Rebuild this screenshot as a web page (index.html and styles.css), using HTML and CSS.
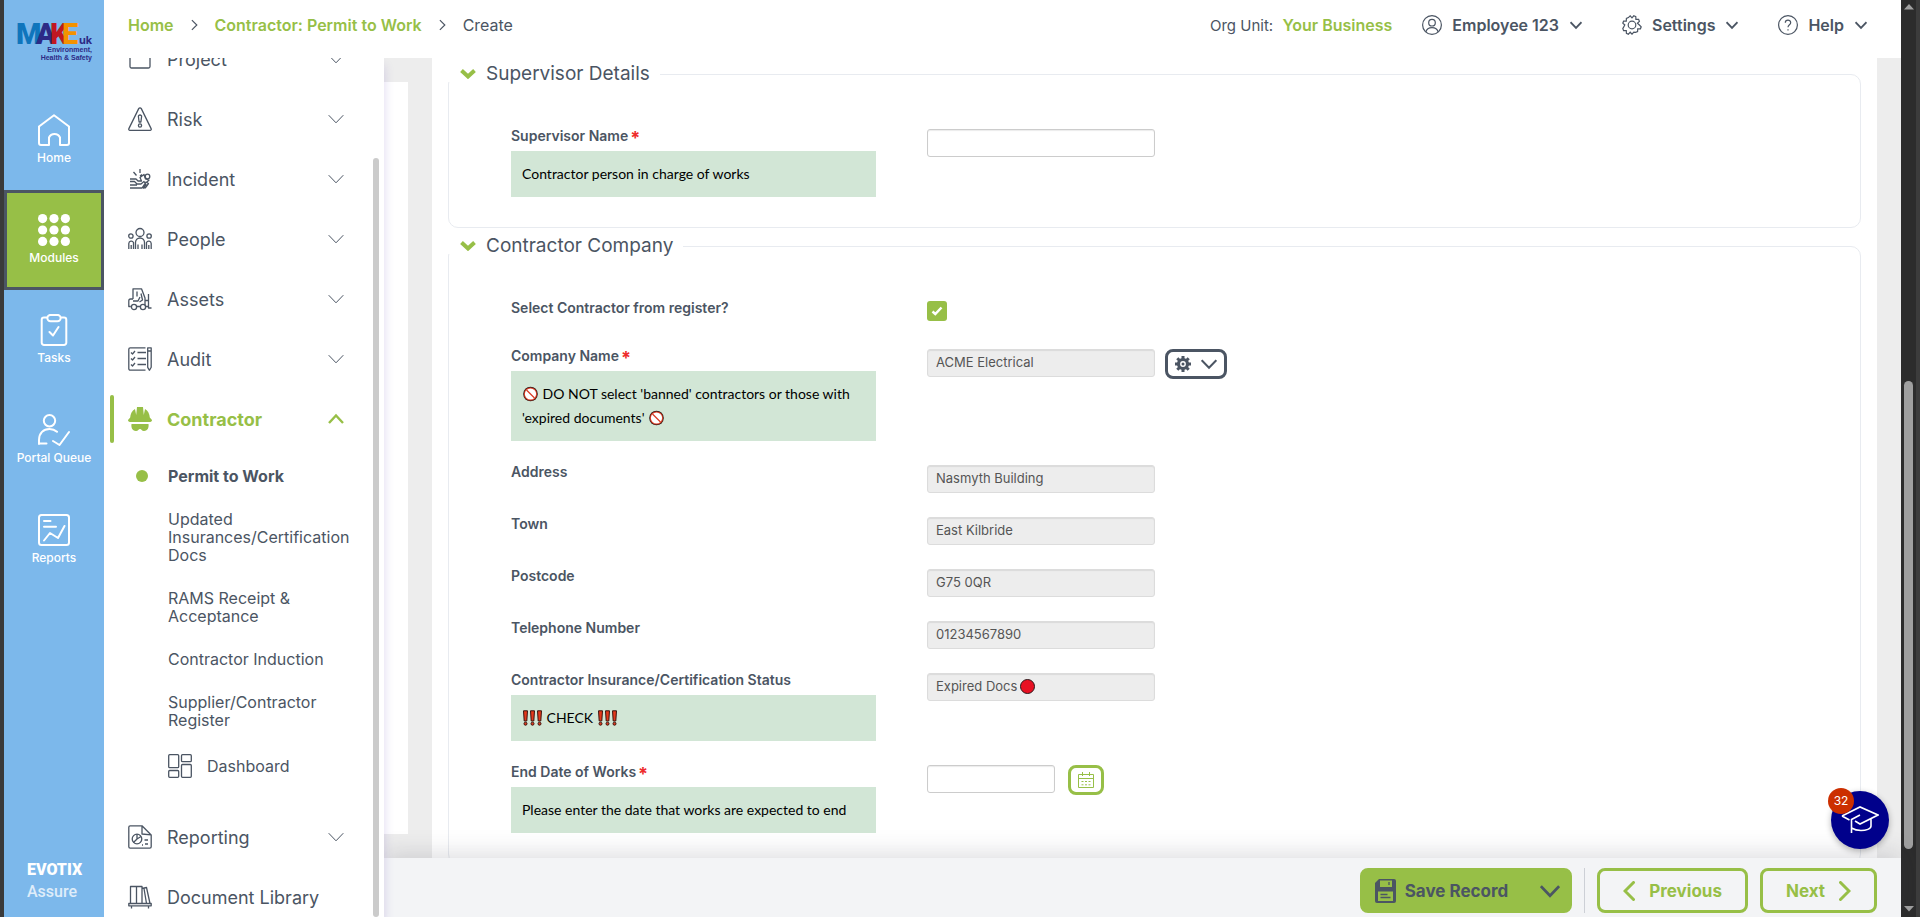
FILE: index.html
```html
<!DOCTYPE html>
<html lang="en">
<head>
    <meta charset="UTF-8">
    <meta name="viewport" content="width=device-width, initial-scale=1.0">
    <title>Contractor: Permit to Work - Create</title>
    <link rel="stylesheet" href="styles.css">
</head>
<body>
    <svg class="sprite" aria-hidden="true">
        <symbol id="chevron-down" viewBox="0 0 16 16"><path d="M.7 4.2 8 11.8l7.3-7.6"/></symbol>
        <symbol id="chevron-up" viewBox="0 0 16 16"><path d="M1 12 8 4.4 15 12"/></symbol>
        <symbol id="chevron-left" viewBox="0 0 12 20"><path d="M10.5 1.5 2 10l8.500 8.500"/></symbol>
        <symbol id="chevron-right" viewBox="0 0 12 20"><path d="M1.500 1.500 10 10l-8.500 8.500"/></symbol>
        <symbol id="ban" viewBox="0 0 16 16">
            <circle cx="8" cy="8" r="7.300" fill="#2b1a18"/>
            <circle cx="8" cy="8" r="6.600" fill="#d93a22"/>
            <circle cx="8" cy="8" r="5.600" fill="#fff"/>
            <path d="m4 4 8 8" stroke="#d93a22" stroke-width="1.200"/>
        </symbol>
        <symbol id="exclaim" viewBox="0 0 7 16">
            <path d="M1.500 .8h4L4.800 11H2.200Z" fill="#e5381b" stroke="#3a1410"/>
            <circle cx="3.500" cy="13.700" r="1.500" fill="#e5381b" stroke="#3a1410"/>
        </symbol>
        <symbol id="gear" viewBox="0 0 20 20">
            <path d="M8.200.8 10 2.800 11.800.8l2 .8.100 2.700 2.700.100.800 2-2 1.800L17.400 10l1.800 1.800-.8 2-2.700.100-.1 2.700-2 .8L11.800 17.200 10 19.200l-1.800-2-1.800 2-2-.8-.1-2.700-2.700-.1-.8-2L2.800 10 .8 8.200l.8-2 2.700-.1.100-2.700 2-.8Z"/>
            <circle cx="10" cy="10" r="3.800"/>
        </symbol>
        <symbol id="gear-solid" viewBox="0 0 16 16">
            <circle cx="8" cy="8" r="4.500" stroke-width="3.200"/>
            <path d="M8 0v3M8 13v3M0 8h3M13 8h3M2.300 2.300l2.200 2.200M11.500 11.500l2.200 2.200M2.300 13.700l2.200-2.200M11.500 4.500l2.200-2.200" stroke-width="3"/>
            <circle cx="8" cy="8" r="1.500" fill="currentColor" stroke="none"/>
        </symbol>
    </svg>

    <aside class="rail">
        <svg class="brand" viewBox="0 0 78 42" role="img" aria-label="Make UK Environment, Health and Safety">
            <text class="brand-letter" x="1" y="22" fill="#0f75bc">M</text>
            <text class="brand-letter" x="21" y="22" fill="#2d2a86">A</text>
            <text class="brand-letter" x="35" y="22" fill="#c01722">K</text>
            <text class="brand-letter" x="47" y="22" fill="#f39200">E</text>
            <text class="brand-uk" x="64" y="22">uk</text>
            <text class="brand-small" x="77" y="30">Environment,</text>
            <text class="brand-small" x="77" y="38">Health &amp; Safety</text>
        </svg>
        <nav class="rail-nav">
            <a class="rail-item" href="#">
                <svg viewBox="0 0 32 32"><path d="M1 12.500 16 1.200 31 12.500V29a2 2 0 0 1-2 2h-7v-7.500a6 6 0 0 0-11 0V31H3a2 2 0 0 1-2-2Z"/></svg>
                Home
            </a>
            <a class="rail-item active" href="#">
                <svg class="dots" viewBox="0 0 32 32">
                    <circle cx="4.600" cy="4.600" r="4.600"/><circle cx="16" cy="4.600" r="4.600"/><circle cx="27.400" cy="4.600" r="4.600"/>
                    <circle cx="4.600" cy="16" r="4.600"/><circle cx="16" cy="16" r="4.600"/><circle cx="27.400" cy="16" r="4.600"/>
                    <circle cx="4.600" cy="27.400" r="4.600"/><circle cx="16" cy="27.400" r="4.600"/><circle cx="27.400" cy="27.400" r="4.600"/>
                </svg>
                Modules
            </a>
            <a class="rail-item" href="#">
                <svg viewBox="0 0 32 32"><path d="M9.500 3.500H6a2.300 2.300 0 0 0-2.300 2.300v22.900A2.300 2.300 0 0 0 6 31h20a2.300 2.300 0 0 0 2.300-2.300V5.800A2.300 2.300 0 0 0 26 3.500h-3.500M12.500.9h7a3 3 0 0 1 0 6.400h-7a3 3 0 0 1 0-6.400ZM11.500 18l3.500 3.500 5.500-8.500"/></svg>
                Tasks
            </a>
            <a class="rail-item" href="#">
                <svg viewBox="0 0 32 32"><circle cx="11.500" cy="6.700" r="5.700"/><path d="M1 30v-4c0-7 4.500-11 10.500-11 3 0 5.500 1 7.500 2.800M1 29.500h7.500M15 27l6.500 4L31 18"/></svg>
                Portal Queue
            </a>
            <a class="rail-item" href="#">
                <svg viewBox="0 0 32 32"><rect x="1" y="1" width="30" height="30" rx="2.500"/><path d="M6 7h6.500M6 12.700h12M6 26.500l6-7.500 8 5 6.500-12"/></svg>
                Reports
            </a>
        </nav>
        <div class="evotix">
            <b>EVOTIX</b>
            <span>Assure</span>
        </div>
    </aside>

    <div class="app">
        <header class="topbar">
            <nav class="breadcrumb">
                <a href="#">Home</a>
                <svg class="crumb-sep" viewBox="0 0 12 20"><use href="#chevron-right"/></svg>
                <a href="#">Contractor: Permit to Work</a>
                <svg class="crumb-sep" viewBox="0 0 12 20"><use href="#chevron-right"/></svg>
                <span>Create</span>
            </nav>
            <div class="tools">
                <span class="org">Org Unit: <a href="#">Your Business</a></span>
                <button type="button" class="tool">
                    <svg class="tool-icon" viewBox="0 0 20 20"><circle cx="10" cy="10" r="9.400"/><circle cx="10" cy="7.700" r="3.300"/><path d="M3.800 17c.8-3 3-4.300 6.200-4.300s5.400 1.300 6.200 4.300"/></svg>
                    Employee 123
                    <svg class="tool-arrow"><use href="#chevron-down"/></svg>
                </button>
                <button type="button" class="tool">
                    <svg class="tool-icon"><use href="#gear"/></svg>
                    Settings
                    <svg class="tool-arrow"><use href="#chevron-down"/></svg>
                </button>
                <button type="button" class="tool">
                    <svg class="tool-icon" viewBox="0 0 20 20"><circle cx="10" cy="10" r="9.400"/><path d="M7.300 7.800C7.300 4.300 12.700 4.300 12.700 7.700c0 2.200-2.700 2-2.700 4.600M10 14.200v1.200"/></svg>
                    Help
                    <svg class="tool-arrow"><use href="#chevron-down"/></svg>
                </button>
            </div>
        </header>

        <div class="workspace">
            <nav class="sidebar">
                <ul class="menu">
                    <li><a class="menu-item" href="#">
                        <svg class="menu-icon" viewBox="0 0 24 24"><path d="M2 6h20v13.500a1.500 1.500 0 0 1-1.500 1.500h-17A1.500 1.500 0 0 1 2 19.500Z"/></svg>
                        <span>Project</span><svg class="menu-arrow"><use href="#chevron-down"/></svg>
                    </a></li>
                    <li><a class="menu-item" href="#">
                        <svg class="menu-icon" viewBox="0 0 24 24"><path d="M12 .8c.6 0 1 .3 1.300.8l9.800 20c.4.900 0 1.700-1 1.700H1.900c-1 0-1.400-.8-1-1.700l9.800-20c.3-.5.700-.8 1.300-.8Z"/><path d="M12 8c1 0 1.700.6 1.600 1.500l-.7 5.500h-1.800l-.7-5.500C10.300 8.600 11 8 12 8Z"/><circle cx="12" cy="18.500" r="1.600"/></svg>
                        <span>Risk</span><svg class="menu-arrow"><use href="#chevron-down"/></svg>
                    </a></li>
                    <li><a class="menu-item" href="#">
                        <svg class="menu-icon" viewBox="0 0 24 24"><circle cx="19.500" cy="9.500" r="2.300"/><path d="M12 2v4M5.500 5l3 3.500M2 12h6l2 2h3.500l-1.500-3.500 4-3 1.500 4.500 3.500 1-2 2M2 14.500h4.500l2.500 2.500h4l3-2.500 2 3-3 4M2 18h7M2 21h12l4-6 2.500 1.500L18 20l-1.500 1.500M12 9l2-1.500"/></svg>
                        <span>Incident</span><svg class="menu-arrow"><use href="#chevron-down"/></svg>
                    </a></li>
                    <li><a class="menu-item" href="#">
                        <svg class="menu-icon" viewBox="0 0 24 24"><circle cx="12" cy="5.500" r="4"/><circle cx="2.900" cy="9" r="2.200"/><circle cx="21.100" cy="9" r="2.200"/><path d="M7.500 22v-6.500a4.500 4.500 0 0 1 9 0V22M10 22v-4.500M14 22v-4.500M.8 22v-5.500a2.500 2.500 0 0 1 4.700-1V22M3.200 22v-4M23.200 22v-5.500a2.500 2.500 0 0 0-4.700-1V22M20.800 22v-4"/></svg>
                        <span>People</span><svg class="menu-arrow"><use href="#chevron-down"/></svg>
                    </a></li>
                    <li><a class="menu-item" href="#">
                        <svg class="menu-icon" viewBox="0 0 24 24"><path d="M5 12V1.800h8.500L17 11v7.500M5 12H2.500C1.500 12 .8 12.800.8 14v5.500h2M9 19.500h3M5 14h5l2-4M9 4.500v5M13 6.500l1.500 6.500-3 2M20.500 7v14h3M17.500 13.500h3M17.500 19.500h3"/><circle cx="6" cy="20" r="2.600"/><circle cx="15" cy="20" r="2.600"/></svg>
                        <span>Assets</span><svg class="menu-arrow"><use href="#chevron-down"/></svg>
                    </a></li>
                    <li><a class="menu-item" href="#">
                        <svg class="menu-icon" viewBox="0 0 24 24"><path d="M17.500 23.200H2.200A1.400 1.400 0 0 1 .8 21.800V2.200C.8 1.400 1.400.8 2.200.8h15.300M19.700.8h3.500v19.500l-1.700 3-1.800-3ZM19.700 4h3.500M3 5.500 4.500 7 7 4M3 11.500 4.500 13 7 10M3 17.500 4.500 19 7 16M9.500 5.500H18M9.500 11.500H18M9.500 17.500H18"/></svg>
                        <span>Audit</span><svg class="menu-arrow"><use href="#chevron-down"/></svg>
                    </a></li>
                    <li>
                        <a class="menu-item open" href="#">
                            <svg class="menu-icon solid" viewBox="0 0 24 24"><path d="M9 0h6l.8 8 1.200-6c3 1.600 4.600 5 4.800 8.500L24 13c0 1.500-1 2-3 2H3c-2 0-3-.5-3-2l2.200-2.500C2.400 7 4 3.600 7 2l1.200 6ZM3.500 17h17c.5 3-.5 7-4.500 7-2.300 0-2.500-2-4-2s-1.700 2-4 2c-4 0-5-4-4.500-7Z"/></svg>
                            <span>Contractor</span><svg class="menu-arrow"><use href="#chevron-up"/></svg>
                        </a>
                        <ul class="submenu">
                            <li class="current"><a href="#">Permit to Work</a></li>
                            <li><a href="#">Updated Insurances/Certification Docs</a></li>
                            <li><a href="#">RAMS Receipt &amp; Acceptance</a></li>
                            <li><a href="#">Contractor Induction</a></li>
                            <li><a href="#">Supplier/Contractor Register</a></li>
                            <li><a class="dashboard" href="#">
                                <svg class="menu-icon" viewBox="0 0 24 24"><rect x=".7" y=".7" width="10" height="13" rx="1"/><rect x="13.500" y=".7" width="9.800" height="7" rx="1"/><rect x=".7" y="16.500" width="10" height="6.800" rx="1"/><rect x="13.500" y="10.500" width="9.800" height="12.800" rx="1"/></svg>
                                Dashboard
                            </a></li>
                        </ul>
                    </li>
                    <li><a class="menu-item" href="#">
                        <svg class="menu-icon" viewBox="0 0 24 24"><path d="M14 .8H2.200A1.400 1.400 0 0 0 .8 2.200v19.600c0 .8.600 1.400 1.400 1.400h19.600c.8 0 1.400-.6 1.400-1.400V10ZM14 .8V9l9 .8"/><circle cx="9" cy="14" r="4.800"/><path d="M9 9v5l-3.500 3.500M9 14l4-2.500M16.500 15H20M17 19h3M14 20h1"/></svg>
                        <span>Reporting</span><svg class="menu-arrow"><use href="#chevron-down"/></svg>
                    </a></li>
                    <li><a class="menu-item" href="#">
                        <svg class="menu-icon" viewBox="0 0 24 24"><path d="M2.500 18.500V1.500h6v17M8.500 1.500h5.500v17M14 3.500l4.500-1 3.500 16M16 3.500l2.500 15M.8 18.500h22.400v2.300H.8ZM3.500 21v2.500M20.500 21v2.500"/></svg>
                        <span>Document Library</span>
                    </a></li>
                </ul>
                <div class="sidebar-thumb"></div>
            </nav>

            <div class="side-panel"></div>

            <main class="form-panel">
                <form id="permit">
                    <fieldset class="section">
                        <legend><svg class="legend-arrow" viewBox="0 0 16 10"><path d="m1.500 1.500 6.500 6 6.500-6"/></svg>Supervisor Details</legend>
                        <div class="row">
                            <div class="row-label">
                                <label for="supervisor">Supervisor Name<span class="required">*</span></label>
                                <p class="help">Contractor person in charge of works</p>
                            </div>
                            <div class="row-field"><input type="text" id="supervisor"></div>
                        </div>
                    </fieldset>

                    <fieldset class="section">
                        <legend><svg class="legend-arrow" viewBox="0 0 16 10"><path d="m1.500 1.500 6.500 6 6.500-6"/></svg>Contractor Company</legend>
                        <div class="row">
                            <div class="row-label"><label for="register">Select Contractor from register?</label></div>
                            <div class="row-field check">
                                <input type="checkbox" id="register" checked>
                                <svg viewBox="0 0 12 10"><path d="M1.500 5.500 4.300 8l6.200-6.500"/></svg>
                            </div>
                        </div>
                        <div class="row">
                            <div class="row-label">
                                <label for="company">Company Name<span class="required">*</span></label>
                                <p class="help"><svg class="emoji"><use href="#ban"/></svg> DO NOT select 'banned' contractors or those with 'expired documents' <svg class="emoji"><use href="#ban"/></svg></p>
                            </div>
                            <div class="row-field">
                                <input type="text" id="company" value="ACME Electrical" disabled>
                                <button type="button" class="options" aria-label="Company options">
                                    <svg class="options-gear"><use href="#gear-solid"/></svg>
                                    <svg class="options-arrow"><use href="#chevron-down"/></svg>
                                </button>
                            </div>
                        </div>
                        <div class="row">
                            <div class="row-label"><label for="address">Address</label></div>
                            <div class="row-field"><input type="text" id="address" value="Nasmyth Building" disabled></div>
                        </div>
                        <div class="row">
                            <div class="row-label"><label for="town">Town</label></div>
                            <div class="row-field"><input type="text" id="town" value="East Kilbride" disabled></div>
                        </div>
                        <div class="row">
                            <div class="row-label"><label for="postcode">Postcode</label></div>
                            <div class="row-field"><input type="text" id="postcode" value="G75 0QR" disabled></div>
                        </div>
                        <div class="row">
                            <div class="row-label"><label for="telephone">Telephone Number</label></div>
                            <div class="row-field"><input type="text" id="telephone" value="01234567890" disabled></div>
                        </div>
                        <div class="row">
                            <div class="row-label">
                                <label for="status">Contractor Insurance/Certification Status</label>
                                <p class="help"><svg class="bang"><use href="#exclaim"/></svg><svg class="bang"><use href="#exclaim"/></svg><svg class="bang"><use href="#exclaim"/></svg> CHECK <svg class="bang"><use href="#exclaim"/></svg><svg class="bang"><use href="#exclaim"/></svg><svg class="bang"><use href="#exclaim"/></svg></p>
                            </div>
                            <div class="row-field"><input type="text" id="status" value="Expired Docs" disabled><span class="status-dot"></span></div>
                        </div>
                        <div class="row">
                            <div class="row-label">
                                <label for="end-date">End Date of Works<span class="required">*</span></label>
                                <p class="help">Please enter the date that works are expected to end</p>
                            </div>
                            <div class="row-field">
                                <input type="text" id="end-date" class="date">
                                <button type="button" class="calendar" aria-label="Pick a date">
                                    <svg viewBox="0 0 16 16"><path d="M.5 2.500h15v13H.5ZM.5 6.500h15M4.500 0v4M11.500 0v4"/><path d="M3.500 9.500h9M3.500 12.800h9" stroke-dasharray="2 1.500"/></svg>
                                </button>
                            </div>
                        </div>
                    </fieldset>
                </form>
            </main>

            <footer class="actions">
                <button type="submit" form="permit" class="btn save">
                    <svg class="disk" viewBox="0 0 21 24"><path d="M4 0h15a2 2 0 0 1 2 2v20a2 2 0 0 1-2 2H2a2 2 0 0 1-2-2V4Z" fill="#4b5563"/><path d="M5 1.500h12v6.500H5ZM3 12.500h15V22H3Z" fill="#97bf47"/><path d="M14 3v3M5.500 15.500h7M5.500 18.500h10" stroke="#4b5563" stroke-width="1.300"/></svg>
                    <span>Save Record</span>
                    <svg class="save-arrow"><use href="#chevron-down"/></svg>
                </button>
                <span class="divider"></span>
                <button type="button" class="btn outline"><svg class="step"><use href="#chevron-left"/></svg>Previous</button>
                <button type="button" class="btn outline">Next<svg class="step"><use href="#chevron-right"/></svg></button>
            </footer>
        </div>
    </div>

    <div class="page-scroll">
        <svg viewBox="0 0 10 6"><path d="M5 0l5 5.500H0Z"/></svg>
        <div class="page-thumb"></div>
        <svg viewBox="0 0 10 6"><path d="M0 0h10L5 5.500Z"/></svg>
    </div>

    <button type="button" class="learning" aria-label="Learning, 32 items">
        <svg viewBox="0 0 38 28"><path d="M1 10 19 1l18 8-18 9-5-3M1 10l7.500 4M19 9l-8.500 4.500V27M30 13v7c0 3-5 4.500-10 4.500-4 0-7-1-9.500-2.500"/></svg>
        <span class="count">32</span>
    </button>
</body>
</html>
```

FILE: styles.css
```css
* {
    box-sizing: border-box;
}
body {
    margin: 0;
    height: 100vh;
    display: flex;
    overflow: hidden;
    font-family: Inter, "Open Sans", sans-serif;
    color: #4b5563;
    background: #fff;
    border-left: 4px solid #3a3a3a;
    border-right: 4px solid #3c3c3c;
}
a {
    color: inherit;
    text-decoration: none;
}
ul {
    list-style: none;
    margin: 0;
    padding: 0;
}
button {
    font-family: inherit;
    color: inherit;
    cursor: pointer;
}
svg {
    fill: none;
    stroke: currentColor;
    flex: none;
}
.sprite {
    position: absolute;
    width: 0;
    height: 0;
}

/* Blue rail */
.rail {
    width: 100px;
    flex: none;
    display: flex;
    flex-direction: column;
    background: #7cb8eb;
    color: #fff;
}
.brand {
    width: 78px;
    height: 42px;
    margin: 22px 0 26px 11px;
    stroke: none;
    overflow: visible;
}
.brand-letter {
    font: 900 29px Roboto, sans-serif;
}
.brand-uk {
    font: 700 11px Inter, sans-serif;
    fill: #2d2a86;
}
.brand-small {
    font: 700 7px "Liberation Sans", sans-serif;
    fill: #2d2a86;
    text-anchor: end;
}
.rail-item {
    height: 100px;
    padding-top: 24px;
    display: flex;
    flex-direction: column;
    align-items: center;
    gap: 4px;
    font-size: 12px;
    font-weight: 500;
    line-height: 16px;
}
.rail-item svg {
    width: 32px;
    height: 32px;
    stroke-width: 2;
    stroke-linecap: round;
    stroke-linejoin: round;
}
.rail-item .dots {
    fill: #fff;
    stroke: none;
}
.rail-item.active {
    padding-top: 21px;
    background: #97bf47;
    border: 3px solid #4b5563;
}
.evotix {
    margin-top: auto;
    padding: 0 0 14px 23px;
    font-family: Roboto, sans-serif;
    font-size: 16px;
    line-height: 22px;
}
.evotix b,
.evotix span {
    display: block;
}
.evotix b {
    font-weight: 900;
}
.evotix span {
    font-weight: 500;
    opacity: .75;
}

/* Top bar */
.app {
    flex: 1;
    min-width: 0;
    display: flex;
    flex-direction: column;
}
.topbar {
    height: 58px;
    flex: none;
    padding: 0 24px 8px;
    display: flex;
    align-items: center;
    justify-content: space-between;
    font-size: 16px;
}
.breadcrumb {
    display: flex;
    align-items: center;
    gap: 17px;
}
.breadcrumb a,
.org a {
    color: #97bf47;
    font-weight: 600;
}
.crumb-sep {
    width: 7px;
    height: 12px;
    stroke-width: 2;
}
.tools {
    display: flex;
    align-items: center;
    gap: 30px;
}
.org {
    font-size: 15px;
}
.org a {
    margin-left: 5px;
    font-size: 16px;
}
.tool {
    display: flex;
    align-items: center;
    gap: 10px;
    padding: 0 10px 0 0;
    border: 0;
    background: none;
    font-size: 16px;
    font-weight: 600;
}
.tool-icon {
    width: 20px;
    height: 20px;
    stroke-width: 1.2;
}
.tool-arrow {
    width: 12px;
    height: 12px;
    margin-left: 1px;
    stroke-width: 2.4;
}

/* Work area */
.workspace {
    flex: 1;
    min-height: 0;
    display: grid;
    grid-template-columns: 280px 48px 1fr;
    grid-template-rows: 1fr 59px;
    background: #ededed;
}
.sidebar {
    grid-row: 1 / 3;
    position: relative;
    z-index: 2;
    overflow: hidden;
    background: #fff;
    box-shadow: 0 8px 10px rgba(90, 60, 180, .2);
    clip-path: inset(0 -12px 0 0);
}
.menu {
    margin-top: -29px;
}
.menu-item {
    height: 60px;
    padding: 0 40px 0 24px;
    display: flex;
    align-items: center;
    gap: 15px;
    font-size: 18px;
}
.menu-item span {
    flex: 1;
}
.menu-icon {
    width: 24px;
    height: 24px;
    stroke-width: 1.3;
    stroke-linejoin: round;
}
.menu-icon.solid {
    fill: #97bf47;
    stroke: none;
}
.menu-arrow {
    width: 16px;
    height: 16px;
}
.menu-item.open {
    position: relative;
    color: #97bf47;
    font-weight: 700;
}
.menu-item.open::before {
    content: "";
    position: absolute;
    left: 6px;
    top: 6px;
    width: 4px;
    height: 48px;
    border-radius: 2px;
    background: #97bf47;
}
.menu-item.open .menu-arrow {
    stroke-width: 2.4;
}
.submenu {
    padding: 18px 24px 29px 64px;
    display: flex;
    flex-direction: column;
    gap: 25px;
    font-size: 16px;
    line-height: 18px;
}
.submenu .current {
    position: relative;
    font-weight: 700;
}
.current::before {
    content: "";
    position: absolute;
    left: -32px;
    top: 3px;
    width: 12px;
    height: 12px;
    border-radius: 50%;
    background: #97bf47;
}
.dashboard {
    display: flex;
    align-items: center;
    gap: 15px;
}
.sidebar-thumb {
    position: absolute;
    right: 5px;
    top: 100px;
    bottom: 0;
    width: 6px;
    border-radius: 3px;
    background: #cbcbcb;
}
.side-panel {
    margin: 24px 24px 24px 0;
    background: #fff;
}
.form-panel {
    margin-right: 24px;
    padding: 8px 16px 0;
    overflow: hidden;
    background: #fff;
}
.section {
    margin: 0 0 10px;
    padding: 47px 62px 30px;
    border: 1px solid #e8ebf0;
    border-radius: 10px;
    min-width: 0;
}
.section legend {
    display: flex;
    align-items: center;
    height: 16px;
    margin-left: -63px;
    padding: 0 10px 0 12px;
    background: #fff;
    font-size: 19px;
    line-height: 16px;
}
.legend-arrow {
    width: 16px;
    height: 10px;
    margin-right: 10px;
    stroke: #97bf47;
    stroke-width: 4;
}
.row {
    display: grid;
    grid-template-columns: 365px 1fr;
    column-gap: 51px;
    min-height: 28px;
}
.row + .row {
    margin-top: 24px;
}
.row-label label {
    display: block;
    margin-bottom: 8px;
    font-size: 14px;
    font-weight: 600;
    line-height: 14px;
}
.required {
    margin-left: 2px;
    color: #ee2b2b;
    font-size: 18px;
    font-weight: 700;
    line-height: 1px;
    vertical-align: -3px;
}
.help {
    margin: 0;
    padding: 11px;
    background: #d2e6d6;
    color: #000;
    font-family: Lato, sans-serif;
    font-size: 14px;
    line-height: 24px;
}
.emoji {
    width: 17px;
    height: 16px;
    vertical-align: -3px;
    stroke: none;
}
.bang {
    width: 7px;
    height: 16px;
    vertical-align: -3px;
}
.row-field {
    position: relative;
    display: flex;
    align-items: flex-start;
    gap: 10px;
}
.row-field input[type="text"] {
    width: 228px;
    height: 28px;
    padding: 0 8px 2px;
    border: 1px solid #ccc;
    border-radius: 3px;
    background: #fff;
    font-family: inherit;
    font-size: 13px;
    box-shadow: inset 0 1px 1px rgba(0, 0, 0, .08);
}
.row-field input[type="text"]:disabled {
    border-color: #dcdcdc;
    background: #ededed;
    color: #555;
}
.row-field input.date {
    width: 128px;
    margin-right: 3px;
}
.row:has(input[type="checkbox"]) {
    min-height: 24px;
}
.row-field input[type="checkbox"] {
    appearance: none;
    width: 20px;
    height: 20px;
    margin: 0;
    border-radius: 3px;
    background: #97bf47;
}
.check svg {
    position: absolute;
    left: 4px;
    top: 5px;
    width: 12px;
    height: 10px;
    stroke: #fff;
    stroke-width: 2.5;
    pointer-events: none;
}
.status-dot {
    position: absolute;
    left: 93px;
    top: 6px;
    width: 15px;
    height: 15px;
    border: 1px solid #2b1a1c;
    border-radius: 50%;
    background: #e81123;
}
.options,
.calendar {
    display: flex;
    align-items: center;
    justify-content: center;
    height: 30px;
    padding: 0;
    border: 3px solid #4b5563;
    border-radius: 8px;
    background: #fff;
}
.options {
    width: 62px;
    gap: 10px;
}
.options-gear {
    width: 16px;
    height: 16px;
}
.options-arrow {
    width: 16px;
    height: 16px;
    stroke-width: 2;
}
.calendar {
    width: 36px;
    border-color: #97bf47;
    color: #97bf47;
}
.calendar svg {
    width: 16px;
    height: 16px;
}

/* Footer actions */
.actions {
    grid-column: 2 / 4;
    position: relative;
    display: flex;
    align-items: center;
    justify-content: flex-end;
    gap: 12px;
    padding: 6px 24px 0 0;
    background: #f3f4f6;
    box-shadow: 0 -4px 24px rgba(60, 60, 80, .18);
}
.btn {
    height: 45px;
    display: flex;
    align-items: center;
    border: 3px solid #97bf47;
    border-radius: 8px;
    font-size: 17px;
    font-weight: 700;
}
.save {
    padding: 0 9px 0 12px;
    gap: 9px;
    background: #97bf47;
}
.save span {
    margin-right: 23px;
}
.disk {
    width: 21px;
    height: 24px;
    stroke: none;
}
.save-arrow {
    width: 20px;
    height: 20px;
    stroke-width: 2.2;
}
.divider {
    width: 1px;
    height: 45px;
    background: #cdd0d6;
}
.outline {
    padding: 0 23px;
    gap: 14px;
    background: none;
    color: #97bf47;
}
.step {
    width: 12px;
    height: 20px;
    stroke-width: 3;
    stroke-linecap: round;
}

/* Window scroll bar */
.page-scroll {
    width: 15px;
    flex: none;
    display: flex;
    flex-direction: column;
    align-items: center;
    padding: 4px 0 5px;
    background: #2c2c2c;
}
.page-scroll svg {
    width: 10px;
    height: 6px;
    fill: #a0a0a0;
    stroke: none;
}
.page-thumb {
    width: 9px;
    height: 51.5%;
    margin: auto 0 57px;
    border-radius: 5px;
    background: #9f9f9f;
}

/* Learning bubble */
.learning {
    position: fixed;
    right: 31px;
    bottom: 68px;
    z-index: 3;
    width: 58px;
    height: 58px;
    padding: 3px 0 0;
    border: 0;
    border-radius: 50%;
    background: #00008b;
    color: #fff;
    box-shadow: 0 2px 6px rgba(0, 0, 0, .3);
}
.learning svg {
    width: 38px;
    height: 28px;
    stroke-width: 1.6;
}
.count {
    position: absolute;
    left: -3px;
    top: -3px;
    width: 26px;
    height: 26px;
    border-radius: 50%;
    background: #cc2f00;
    font-size: 12px;
    line-height: 26px;
}
```
